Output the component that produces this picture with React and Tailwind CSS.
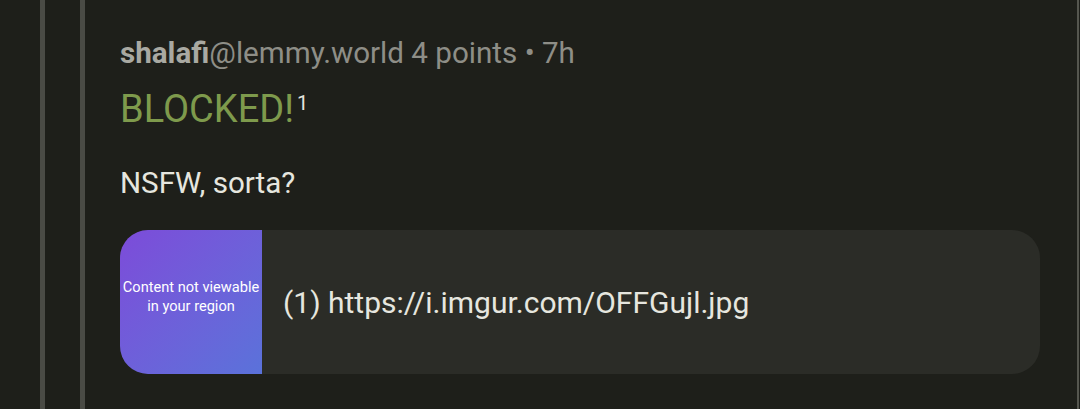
export default function App() {
  return (
    <div
      className="w-[1080px] h-[409px] bg-[#1e1f1a] flex overflow-hidden relative"
      style={{ fontFamily: "Roboto, 'Liberation Sans', sans-serif" }}
    >
      <div className="w-[40px] shrink-0" />
      <div className="w-[5px] shrink-0 bg-[#4a4b45]" />
      <div className="w-[35px] shrink-0" />
      <div className="w-[5px] shrink-0 bg-[#4a4b45]" />
      <div className="w-[35px] shrink-0" />
      <div className="flex-1 flex flex-col pt-[35px] pr-[40px]">
        <div className="text-[29.6px] leading-[36px] text-[#8e8e87] whitespace-nowrap">
          <span className="font-bold text-[#a9a9a2]">shalafi</span>
          <span>@lemmy.world 4 points • 7h</span>
        </div>
        <div className="mt-[16px] h-[44px] text-[38px] leading-[44px] text-[#7e9a4c] whitespace-nowrap flex items-start">
          <span>BLOCKED!</span>
          <span className="text-[20px] leading-[20px] text-[#e4e4de] mt-[6px] ml-[3px]">1</span>
        </div>
        <div className="mt-[34px] text-[29.6px] leading-[36px] text-[#e6e6df]">NSFW, sorta?</div>
        <div className="mt-[29px] h-[144px] rounded-[28px] bg-[#2b2c27] flex overflow-hidden">
          <div className="w-[142px] shrink-0 bg-gradient-to-br from-[#7c4bd9] to-[#5a72da] flex items-center justify-center text-center text-white text-[14.6px] leading-[19px] pb-[11px]">
            <div>
              Content not viewable
              <br />
              in your region
            </div>
          </div>
          <div className="flex items-center pl-[21px] text-[30px] text-[#e6e6df] whitespace-nowrap">
            (1) https://i.imgur.com/OFFGujl.jpg
          </div>
        </div>
      </div>
      <div className="absolute right-[1px] top-0 w-[2px] h-full bg-[#55564f]" />
    </div>
  );
}
